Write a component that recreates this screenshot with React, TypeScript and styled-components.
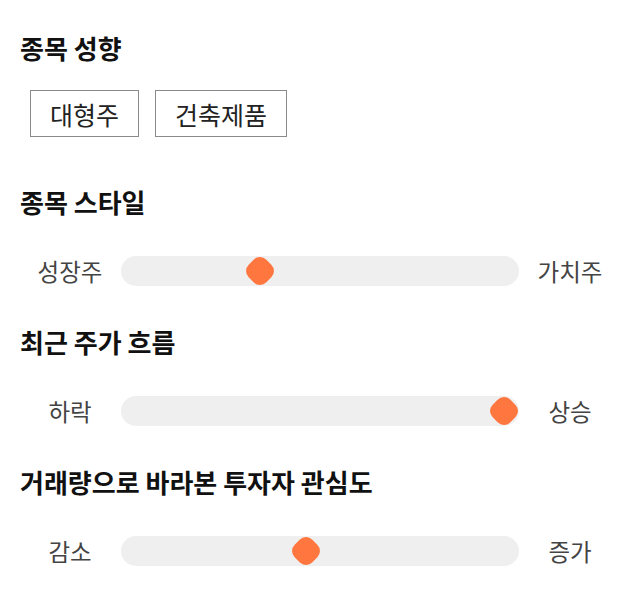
import React from 'react';
import styled, { createGlobalStyle } from 'styled-components';

interface SliderData {
  title: string;
  left: string;
  right: string;
  value: number;
}

const sliders: SliderData[] = [
  { title: '종목 스타일', left: '성장주', right: '가치주', value: 0.337 },
  { title: '최근 주가 흐름', left: '하락', right: '상승', value: 1 },
  { title: '거래량으로 바라본 투자자 관심도', left: '감소', right: '증가', value: 0.462 },
];

const tags = ['대형주', '건축제품'];

function App() {
  return (
    <>
      <GlobalStyle />
      <Page>
        <Section>
          <Title>종목 성향</Title>
          <TagRow>
            {tags.map((tag) => (
              <Tag key={tag}>{tag}</Tag>
            ))}
          </TagRow>
        </Section>
        {sliders.map((item) => (
          <Section key={item.title} $gap={37}>
            <Title>{item.title}</Title>
            <SliderRow>
              <Label>{item.left}</Label>
              <Track>
                <Thumb style={{ left: `calc(15px + (100% - 30px) * ${item.value})` }} />
              </Track>
              <Label>{item.right}</Label>
            </SliderRow>
          </Section>
        ))}
      </Page>
    </>
  );
}

export default App;

const GlobalStyle = createGlobalStyle`
  body {
    margin: 0;
    background: #ffffff;
    font-family: 'Noto Sans CJK KR', 'Noto Sans', sans-serif;
  }
`;

const Page = styled.div`
  display: flex;
  flex-direction: column;
  gap: 39px;
  padding: 31px 20px 0;
`;

const Section = styled.section<{ $gap?: number }>`
  display: flex;
  flex-direction: column;
  gap: ${({ $gap }) => $gap ?? 25}px;
`;

const Title = styled.h3`
  margin: 0;
  font-size: 26px;
  font-weight: 700;
  line-height: 34px;
  color: #111111;
`;

const TagRow = styled.div`
  display: flex;
  gap: 16px;
  padding-left: 10px;
  margin-bottom: 9px;
`;

const Tag = styled.div`
  box-sizing: border-box;
  height: 47px;
  display: flex;
  align-items: center;
  padding: 0 19px;
  border: 1px solid #8a8a8a;
  font-size: 25px;
  color: #222222;
`;

const SliderRow = styled.div`
  display: grid;
  grid-template-columns: 100px 1fr 100px;
  align-items: center;
  height: 30px;
`;

const Label = styled.span`
  text-align: center;
  font-size: 23.5px;
  line-height: 30px;
  color: #444444;
`;

const Track = styled.div`
  position: relative;
  height: 30px;
  margin: 0 1px;
  border-radius: 15px;
  background: #efefef;
`;

const Thumb = styled.div`
  position: absolute;
  top: 50%;
  width: 25px;
  height: 25px;
  border-radius: 9px;
  background: #ff763e;
  transform: translate(-50%, -50%) rotate(45deg);
`;
